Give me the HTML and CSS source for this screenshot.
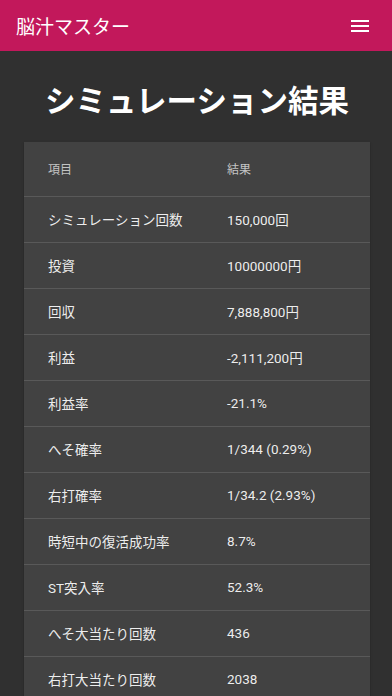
FILE: index.html
```html
<!DOCTYPE html>
<html lang="ja">
<head>
<meta charset="utf-8">
<title>脳汁マスター</title>
<link rel="stylesheet" href="styles.css">
</head>
<body>
<header class="appbar">
  <span class="app-title">脳汁マスター</span>
  <button class="menu-btn" aria-label="menu">
    <svg viewBox="0 0 24 24" width="24" height="24"><path fill="#fff" d="M3 18h18v-2H3v2zm0-5h18v-2H3v2zm0-7v2h18V6H3z"/></svg>
  </button>
</header>
<main class="content">
  <h1 class="page-title">シミュレーション結果</h1>
  <div class="card">
    <table class="result-table">
      <thead>
        <tr><th>項目</th><th>結果</th></tr>
      </thead>
      <tbody>
        <tr><td>シミュレーション回数</td><td>150,000回</td></tr>
        <tr><td>投資</td><td>10000000円</td></tr>
        <tr><td>回収</td><td>7,888,800円</td></tr>
        <tr><td>利益</td><td>-2,111,200円</td></tr>
        <tr><td>利益率</td><td>-21.1%</td></tr>
        <tr><td>へそ確率</td><td>1/344 (0.29%)</td></tr>
        <tr><td>右打確率</td><td>1/34.2 (2.93%)</td></tr>
        <tr><td>時短中の復活成功率</td><td>8.7%</td></tr>
        <tr><td>ST突入率</td><td>52.3%</td></tr>
        <tr><td>へそ大当たり回数</td><td>436</td></tr>
        <tr><td>右打大当たり回数</td><td>2038</td></tr>
      </tbody>
    </table>
  </div>
</main>
</body>
</html>
```
FILE: styles.css
```css
* { box-sizing: border-box; }
html, body {
  margin: 0;
  padding: 0;
  background: #303030;
  font-family: Roboto, "Noto Sans CJK JP", sans-serif;
  color: #fff;
}
.appbar {
  height: 51px;
  background: #c2185b;
  display: flex;
  align-items: center;
  justify-content: space-between;
  padding: 0 20px 0 16px;
}
.app-title {
  font-size: 19px;
  color: #fff;
}
.menu-btn {
  background: none;
  border: 0;
  padding: 0;
  width: 24px;
  height: 24px;
  display: flex;
}
.content {
  padding: 0 22px 0 24px;
}
.page-title {
  margin: 0;
  height: 91px;
  padding-top: 4px;
  display: flex;
  align-items: center;
  justify-content: center;
  font-size: 30.5px;
  font-weight: bold;
  color: #fff;
}
.card {
  background: #424242;
  box-shadow: 0 2px 1px -1px rgba(0,0,0,.2), 0 1px 1px 0 rgba(0,0,0,.14), 0 1px 3px 0 rgba(0,0,0,.12);
}
.result-table {
  width: 100%;
  border-collapse: collapse;
}
.result-table th,
.result-table td {
  text-align: left;
  padding: 0 0 0 24px;
  border-bottom: 1px solid rgba(255,255,255,0.12);
}
.result-table th:first-child,
.result-table td:first-child { width: 179px; }
.result-table th {
  height: 54px;
  font-size: 12px;
  font-weight: normal;
  color: rgba(255,255,255,0.7);
}
.result-table td {
  height: 46px;
  font-size: 13.5px;
  color: rgba(255,255,255,0.92);
}
```
